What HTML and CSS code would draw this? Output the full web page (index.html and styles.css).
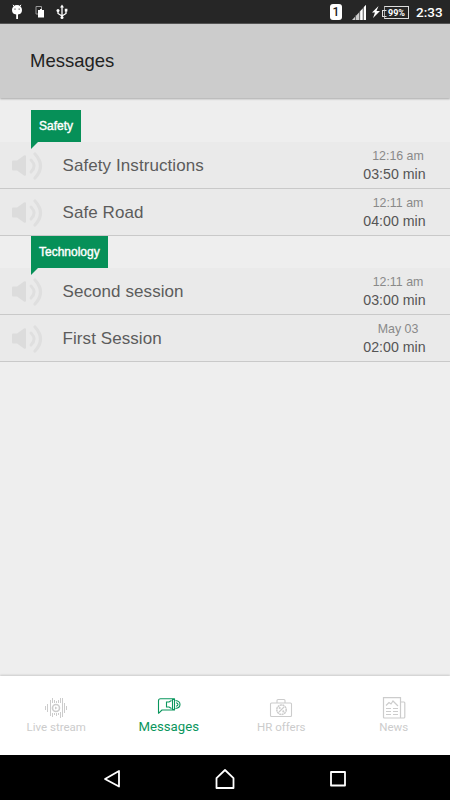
FILE: index.html
```html
<!DOCTYPE html>
<html lang="en">
  <head>
    <meta charset="UTF-8" />
    <meta name="viewport" content="width=device-width, initial-scale=1.0" />
    <title>Messages</title>
    <link rel="stylesheet" href="styles.css">
  </head>
  <body>
    <svg width="0" height="0" class="defs">
      <symbol id="speaker" viewBox="0 0 32 30">
        <path d="M1 10.500q0-1 1-1h4l7-5q2-1 2 1v18q0 2-2 1l-7-5H2q-1 0-1-1z" fill="#dcdcdc" />
        <path d="M20 9q6 6 0 12" fill="none" stroke="#dfdfdf" stroke-width="3" stroke-linecap="round" />
        <path d="M24 3q11 12 0 24" fill="none" stroke="#dfdfdf" stroke-width="3.200" stroke-linecap="round" />
      </symbol>
    </svg>

    <div class="status">
      <svg class="notifications" width="60" height="16" viewBox="0 0 60 16" fill="#fff">
        <path d="M2 6a5 5 0 0 1 10 0 4.500 4.500 0 0 1-4 4.500V15H6.200v-4.500A4.500 4.500 0 0 1 2 6z" />
        <path d="M3 .8l1.500 2M11 .8l-1.500 2" stroke="#fff" />
        <path d="M4.300 4.500h1.400v1.200H4.300zM8.500 4.500h1.400v1.200H8.500z" fill="#777" />
        <path d="M28 10h-2V2.500h5.500V5" fill="none" stroke="#999" />
        <path d="M28 6h2V5h2v1h2v7.500h-6z" />
        <path d="M52 3v11M48 7v2.500l4 2.500M56 6v3.500L52 12" fill="none" stroke="#fff" stroke-width="1.300" />
        <path d="M52 .5l2 3h-4zM54.800 4.800h2.600v2.600h-2.600z" />
        <circle cx="48" cy="6.500" r="1.500" />
        <circle cx="52" cy="13.500" r="1.500" />
      </svg>
      <div class="system">
        <span class="sim">1</span>
        <svg class="signal" width="14" height="15" viewBox="0 0 14 15">
          <path d="M0 15L14 0v15z" fill="#ccc" />
          <path d="M8.500 15V6l2-2v11zM12 15V2l2-2v15z" fill="#fff" />
          <path d="M3.500 10v5M7.500 7v8M11.300 3v12" stroke="#555" stroke-width=".8" />
        </svg>
        <svg class="bolt" width="8" height="12" viewBox="0 0 8 12"><path d="M6.500 0L0 6.500h3L1 12l7-7H4.500z" fill="#fff" /></svg>
        <span class="battery">99%</span>
        <span class="clock">2:33</span>
      </div>
    </div>

    <header class="header">
      <h1>Messages</h1>
    </header>

    <main class="list">
      <section class="group">
        <div class="group-head"><h2 class="tag">Safety</h2></div>
        <div class="row">
          <svg class="speaker"><use href="#speaker" /></svg>
          <p class="title">Safety Instructions</p>
          <div class="meta">
            <p class="when">12:16 am</p>
            <p class="length">03:50 min</p>
          </div>
        </div>
        <div class="row">
          <svg class="speaker"><use href="#speaker" /></svg>
          <p class="title">Safe Road</p>
          <div class="meta">
            <p class="when">12:11 am</p>
            <p class="length">04:00 min</p>
          </div>
        </div>
      </section>
      <section class="group">
        <div class="group-head"><h2 class="tag">Technology</h2></div>
        <div class="row">
          <svg class="speaker"><use href="#speaker" /></svg>
          <p class="title">Second session</p>
          <div class="meta">
            <p class="when">12:11 am</p>
            <p class="length">03:00 min</p>
          </div>
        </div>
        <div class="row">
          <svg class="speaker"><use href="#speaker" /></svg>
          <p class="title">First Session</p>
          <div class="meta">
            <p class="when">May 03</p>
            <p class="length">02:00 min</p>
          </div>
        </div>
      </section>
    </main>

    <nav class="tabs">
      <a class="tab">
        <svg width="24" height="22" viewBox="0 0 24 22" fill="none" stroke="#ccc">
          <path d="M1.500 9v4M3.500 7v8M6.500 3v16M8.500 1v5M8.500 16v4M10.500 3v3M10.500 16v2M12.500 4v2M12.500 16v3M14.500 3v3M14.500 16v2M16.500 1v5M16.500 15v6M18.500 1v19M20.500 6v10M22.500 9v4" />
          <circle cx="12" cy="11" r="3.500" stroke-width="1.600" />
          <path d="M11 9.500l2.500 1.500-2.500 1.500z" fill="#ccc" stroke="none" />
        </svg>
        <span>Live stream</span>
      </a>
      <a class="tab active">
        <svg width="24" height="22" viewBox="0 0 24 22" fill="none" stroke="#0a965d" stroke-width="1.100">
          <path d="M17.500 3.500V1.800h-14q-2 0-2 2v12.500l3.500-3.300h12.500v-2" stroke-linejoin="round" />
          <path d="M14.500 3.500l-2.500 1.500h-2.500v5H12l2.500 1.500M15.500 2.500v10h2v-10z" />
          <path d="M18.500 3.500q4.500 .5 4.500 4t-4.500 4M19 5.700q2 .3 2 1.800t-2 1.800" />
        </svg>
        <span>Messages</span>
      </a>
      <a class="tab">
        <svg width="24" height="22" viewBox="0 0 24 22" fill="none" stroke="#ccc" stroke-width="1.100">
          <rect x="1.500" y="6" width="21" height="13.500" rx="1" />
          <path d="M8 6V3.500q0-1 1-1h6q1 0 1 1V6M10 15l5-5" />
          <circle cx="12.500" cy="12.700" r="4.700" stroke-width="1.500" stroke-dasharray="2 .5" />
          <circle cx="10.700" cy="11" r=".5" />
          <circle cx="14.300" cy="14.400" r=".5" />
        </svg>
        <span>HR offers</span>
      </a>
      <a class="tab">
        <svg width="24" height="22" viewBox="0 0 24 22" fill="none" stroke="#ccc" stroke-width="1.200">
          <path d="M18.500 21h-16q-1 0-1-1V.6h17zM18.500 5H22q.8 0 .8 1v14q0 1-1 1h-3.300z" />
          <path d="M4 8.500l3-3 2 1.500L11 4l5 5M4 11.500h5M11 11.500h5M4 14.500h5M11 14.500h5M4 17.500h5M11 17.500h5" />
        </svg>
        <span>News</span>
      </a>
    </nav>

    <div class="navbar">
      <svg width="18" height="20" viewBox="0 0 18 20"><path d="M16 2v15.500L2 10z" /></svg>
      <svg width="20" height="22" viewBox="0 0 20 22"><path d="M1.500 20V10.200L10 2l8.500 8.200V20z" /></svg>
      <svg width="18" height="18" viewBox="0 0 18 18"><path d="M2 2h14v13.500H2z" /></svg>
    </div>
  </body>
</html>
```
FILE: styles.css
```css
* {
  padding: 0;
  margin: 0;
  box-sizing: border-box;
}

body {
  display: flex;
  flex-direction: column;
  height: 800px;
  overflow: hidden;
  background-color: #eee;
  font-family: "Liberation Sans", Arial, sans-serif;
  font-weight: 400;
}

.defs {
  position: absolute;
}

/* Status bar */
.status {
  display: flex;
  justify-content: space-between;
  height: 24px;
  padding: 0 8px 0 10px;
  background-color: #262626;
  border-bottom: 1px solid #555;
  color: #fff;
  font-family: Roboto, sans-serif;
}

.notifications {
  margin-top: 4px;
}

.system {
  display: flex;
  align-items: center;
  padding-top: 1px;
}

.sim {
  width: 12px;
  height: 16px;
  border-radius: 3px;
  background-color: #fff;
  color: #222;
  font-size: 12px;
  font-weight: 500;
  line-height: 16px;
  text-align: center;
}

.signal {
  margin-left: 10px;
}

.bolt {
  margin-left: 6px;
}

.battery {
  position: relative;
  width: 25px;
  height: 13px;
  margin-left: 4px;
  border: 1px solid #ddd;
  border-left-color: #aaa;
  font-size: 9px;
  font-weight: 700;
  line-height: 12px;
  text-align: center;
}

.battery::before {
  content: "";
  position: absolute;
  left: -3px;
  top: 3px;
  width: 3px;
  height: 5px;
  border: 1px solid #ddd;
  border-right-color: #262626;
}

.clock {
  width: 26px;
  margin-left: 7px;
  font-size: 13.5px;
  font-weight: 500;
  white-space: nowrap;
}

/* Header */
.header {
  display: flex;
  align-items: center;
  height: 74px;
  padding: 0 30px 1px;
  background-color: #ccc;
  box-shadow: 0 1px 2px rgba(0, 0, 0, 0.3);
}

h1 {
  color: #222;
  font-size: 18.5px;
  font-weight: 400;
}

/* List */
.list {
  flex: 1;
  padding-top: 12px;
}

.group-head {
  padding-left: 31px;
}

.tag {
  position: relative;
  width: max-content;
  height: 32px;
  padding: 0 8px;
  background-color: #069058;
  color: #fff;
  font-size: 12px;
  font-weight: 400;
  line-height: 33px;
  -webkit-text-stroke: 0.4px #fff;
}

.tag::after {
  content: "";
  position: absolute;
  left: 0;
  top: 100%;
  border-top: 7px solid #069058;
  border-right: 7px solid transparent;
}

.row {
  display: flex;
  align-items: center;
  height: 47px;
  padding: 2px 24px 0 11px;
  background-color: #eaeaea;
  border-bottom: 1px solid #c9c9c9;
}

.speaker {
  width: 32px;
  height: 30px;
}

.title {
  flex: 1;
  padding-left: 19.5px;
  color: #5c5c5c;
  font-size: 17px;
  letter-spacing: 0.08px;
}

.meta {
  text-align: center;
  width: 63px;
  margin-top: -1px;
}

.when {
  color: #898989;
  font-size: 12.4px;
  line-height: 18px;
  padding-left: 7px;
}

.length {
  color: #555;
  font-size: 14.2px;
  line-height: 19px;
  white-space: nowrap;
}

/* Bottom tabs */
.tabs {
  display: flex;
  height: 79px;
  background-color: #fff;
  box-shadow: 0 -1px 2px rgba(0, 0, 0, 0.15);
}

.tab {
  display: flex;
  flex: 1;
  flex-direction: column;
  align-items: center;
  padding-top: 21px;
  color: #ccc;
  font-family: Roboto, sans-serif;
  font-size: 11.5px;
  line-height: 16px;
}

.tab.active {
  color: #0a965d;
  font-size: 13.2px;
}

/* Android buttons */
.navbar {
  display: flex;
  justify-content: center;
  align-items: center;
  gap: 94px;
  height: 45px;
  padding-top: 3px;
  background-color: #000;
}

.navbar path {
  fill: none;
  stroke: #fff;
  stroke-width: 1.8;
  stroke-linejoin: round;
}
```
